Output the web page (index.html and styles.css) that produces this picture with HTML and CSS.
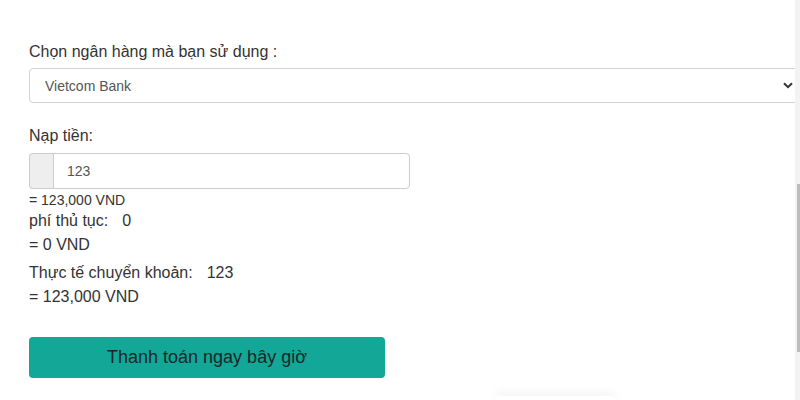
FILE: index.html
```html
<!DOCTYPE html>
<html lang="vi">
<head>
<meta charset="utf-8">
<title>Nạp tiền</title>
<link rel="stylesheet" href="styles.css">
</head>
<body>
<div class="form">
  <div class="label">Chọn ngân hàng mà bạn sử dụng :</div>
  <div class="select-wrap">
    <select class="select">
      <option>Vietcom Bank</option>
    </select>
    <svg class="chevron" width="10" height="7" viewBox="0 0 10 7"><path d="M1 1.2 L5 5.2 L9 1.2" fill="none" stroke="#333" stroke-width="2"/></svg>
  </div>
  <div class="label label-deposit">Nạp tiền:</div>
  <div class="input-group">
    <span class="addon"></span>
    <input class="input" type="text" value="123">
  </div>
  <div class="small">= 123,000 VND</div>
  <div class="line line-fee">phí thủ tục:<span class="val">0</span></div>
  <div class="line line-eq">= 0 VND</div>
  <div class="line line-real">Thực tế chuyển khoản:<span class="val">123</span></div>
  <div class="line line-eq">= 123,000 VND</div>
  <button class="btn" type="button">Thanh toán ngay bây giờ</button>
</div>
<div class="popup-edge"></div>
<div class="scrollbar"><div class="thumb"></div></div>
</body>
</html>
```
FILE: styles.css
```css
html, body {
  margin: 0;
  padding: 0;
  background: #fff;
}
body {
  font-family: "Liberation Sans", Arial, sans-serif;
  color: #333;
  width: 800px;
  height: 400px;
  overflow: hidden;
  position: relative;
}
.form {
  display: flex;
  flex-direction: column;
  align-items: flex-start;
  padding: 42px 0 0 29px;
}
.label {
  font-size: 16px;
  line-height: 20px;
  color: #333;
}
.select-wrap {
  position: relative;
  margin-top: 6px;
  width: 771px;
}
.select {
  appearance: none;
  -webkit-appearance: none;
  display: block;
  width: 100%;
  height: 35px;
  box-sizing: border-box;
  border: 1px solid #d2d2d2;
  border-radius: 4px;
  background: #fff;
  padding: 0 0 0 15px;
  font-family: "Liberation Sans", Arial, sans-serif;
  font-size: 14px;
  color: #555;
  outline: none;
}
.chevron {
  position: absolute;
  right: 7px;
  top: 14px;
}
.label-deposit {
  margin-top: 23px;
}
.input-group {
  display: flex;
  margin-top: 7px;
  width: 381px;
  height: 36px;
}
.addon {
  width: 24px;
  box-sizing: border-box;
  background: #eee;
  border: 1px solid #ccc;
  border-right: none;
  border-radius: 4px 0 0 4px;
}
.input {
  flex: 1;
  box-sizing: border-box;
  height: 36px;
  border: 1px solid #ccc;
  border-radius: 0 4px 4px 0;
  padding: 0 13px;
  font-family: "Liberation Sans", Arial, sans-serif;
  font-size: 14px;
  color: #555;
  outline: none;
}
.small {
  font-size: 14px;
  line-height: 18px;
  margin-top: 2px;
  color: #333;
}
.line {
  font-size: 16px;
  line-height: 20px;
  color: #333;
}
.line-fee {
  margin-top: 2px;
}
.line-eq {
  margin-top: 4px;
}
.line-real {
  margin-top: 8px;
}
.val {
  margin-left: 14px;
}
.btn {
  margin-top: 30px;
  width: 356px;
  height: 41px;
  background: #12a797;
  border: none;
  border-radius: 4px;
  font-family: "Liberation Sans", Arial, sans-serif;
  font-size: 18px;
  color: #1c2626;
  padding: 0;
  cursor: pointer;
}
.popup-edge {
  position: absolute;
  left: 495px;
  top: 396px;
  width: 120px;
  height: 4px;
  background: #fff;
  box-shadow: 0 -2px 10px rgba(0, 0, 0, 0.1);
  border-radius: 4px 4px 0 0;
}
.scrollbar {
  position: absolute;
  top: 0;
  right: 0;
  width: 5px;
  height: 400px;
  background: #f3f3f3;
}
.thumb {
  position: absolute;
  top: 184px;
  right: 0;
  width: 3px;
  height: 168px;
  background: #bdbdbd;
}
```
